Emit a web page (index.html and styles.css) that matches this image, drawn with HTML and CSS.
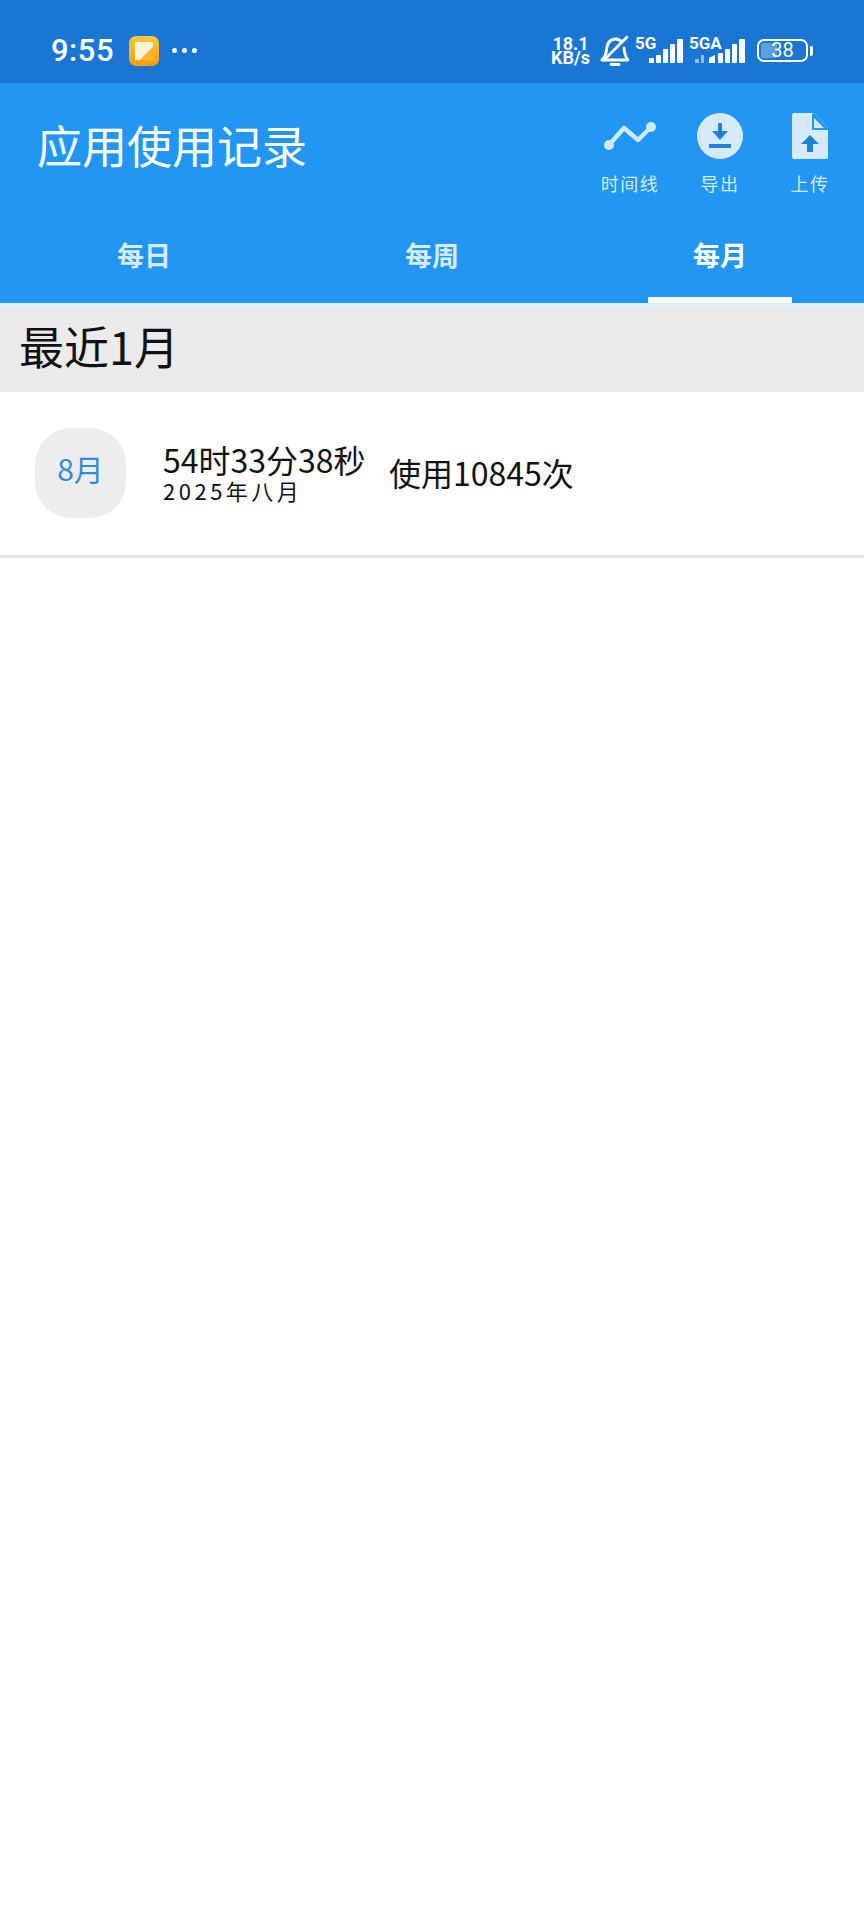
FILE: index.html
```html
<!DOCTYPE html>
<html lang="zh-CN">
<head>
    <meta charset="UTF-8">
    <meta name="viewport" content="width=device-width, initial-scale=1.0">
    <title>应用使用记录</title>
    <link rel="stylesheet" href="styles.css">
</head>
<body>

    <!-- barra de estado -->
    <div class="status-bar">
        <span class="clock">9:55</span>
        <svg class="app-icon" viewBox="0 0 30 30">
            <defs>
                <linearGradient id="appFondo" x1="0" y1="0" x2="0" y2="1">
                    <stop offset="0" stop-color="#ffc83d"/>
                    <stop offset="1" stop-color="#fb9d17"/>
                </linearGradient>
            </defs>
            <rect x="0" y="0" width="30" height="30" rx="7" fill="url(#appFondo)"/>
            <path d="M6 6H24V11L11 24H6Z" fill="#fff3d6"/>
            <path d="M24 11V24H11Z" fill="#ffb52e"/>
        </svg>
        <div class="dots"><i></i><i></i><i></i></div>

        <div class="status-right">
            <div class="net-speed"><span>18.1</span><span>KB/s</span></div>
            <svg class="bell" viewBox="0 0 30 32" fill="none" stroke="#fff" stroke-width="2.800" stroke-linecap="round" stroke-linejoin="round">
                <path d="M2 25C5 22 6 20 6.500 15C7 8 10 4 16 4C18 4 19.500 5 21 6"/>
                <path d="M24 13C24.500 20 25.500 22 28 25H2"/>
                <path d="M11 29.500H19"/>
                <path d="M27 2L4 25"/>
            </svg>
            <div class="signal">
                <span class="net-type">5G</span>
                <svg class="bars" viewBox="0 0 34 24" fill="#fff">
                    <rect x="0" y="19" width="5" height="5" rx="1"/>
                    <rect x="7" y="16" width="5" height="8" rx="1"/>
                    <rect x="14" y="10" width="5" height="14" rx="1"/>
                    <rect x="21" y="5" width="5" height="19" rx="1"/>
                    <rect x="28" y="0" width="6" height="24" rx="1"/>
                </svg>
            </div>
            <div class="signal signal-b">
                <span class="net-type">5GA</span>
                <svg class="bars" viewBox="0 0 50 24" fill="#fff">
                    <rect x="0" y="20" width="4" height="4" opacity=".5"/>
                    <rect x="6" y="16" width="3" height="8" opacity=".5"/>
                    <path d="M14 19L20 16V24H14Z"/>
                    <rect x="23" y="14" width="5" height="10" rx="1"/>
                    <rect x="30" y="10" width="5" height="14" rx="1"/>
                    <rect x="37" y="5" width="5" height="19" rx="1"/>
                    <rect x="44" y="0" width="6" height="24" rx="1"/>
                </svg>
            </div>
            <div class="battery">
                <div class="battery-body">
                    <div class="battery-level" style="width: 38%"></div>
                    <span class="battery-text">38</span>
                </div>
                <div class="battery-nub"></div>
            </div>
        </div>
    </div>

    <!-- cabecera -->
    <header class="app-header">
        <div class="title-row">
            <h1>应用使用记录</h1>
            <div class="actions">
                <div class="action action-line">
                    <svg viewBox="0 0 52 29" fill="none" stroke="#cfe8fb" stroke-width="4.500" stroke-linecap="round" stroke-linejoin="round">
                        <path d="M5 24L20 7L34 19L47 6"/>
                        <g fill="#cfe8fb" stroke="none">
                            <circle cx="5" cy="24" r="5"/>
                            <circle cx="47" cy="6" r="5"/>
                        </g>
                    </svg>
                    <span>时间线</span>
                </div>
                <div class="action action-down">
                    <svg viewBox="0 0 46 46">
                        <circle cx="23" cy="23" r="23" fill="#d6eafc"/>
                        <path d="M23 10V22" stroke="#2183d8" stroke-width="4" fill="none"/>
                        <path d="M15 18H31L23 27Z" fill="#2183d8"/>
                        <rect x="12" y="31" width="22" height="4" fill="#2183d8"/>
                    </svg>
                    <span>导出</span>
                </div>
                <div class="action action-up">
                    <svg viewBox="0 0 36 46">
                        <path d="M2 0H22L36 15V44Q36 46 34 46H2Q0 46 0 44V2Q0 0 2 0Z" fill="#d6eafc"/>
                        <path d="M20 1V17H36V15L22 0Z" fill="#2196f3"/>
                        <path d="M22 5L32 15H22Z" fill="#d6eafc"/>
                        <path d="M18 22L27 31H21V39H15V31H9Z" fill="#2183d8"/>
                    </svg>
                    <span>上传</span>
                </div>
            </div>
        </div>
        <nav class="tabs">
            <div class="tab">每日</div>
            <div class="tab">每周</div>
            <div class="tab tab-active">每月</div>
        </nav>
    </header>

    <h2 class="section-title">最近1月</h2>

    <div class="record-row">
        <div class="month-badge">8月</div>
        <div class="record-info">
            <div class="record-time">54时33分38秒</div>
            <div class="record-date">2025年八月</div>
        </div>
        <div class="record-count">使用10845次</div>
    </div>

</body>
</html>
```

FILE: styles.css
```css
* {
    box-sizing: border-box;
}

body {
    margin: 0;
    height: 1920px;
    background-color: #fff;
    font-family: "Noto Sans CJK SC", "Noto Sans", sans-serif;
    overflow: hidden;
}

/* barra de estado */
.status-bar {
    height: 83px;
    background-color: #1976d2;
    display: flex;
    align-items: center;
    padding: 18px 51px 0 51px;
    color: #fff;
}

.clock {
    font-family: Roboto, sans-serif;
    font-size: 31px;
    font-weight: 500;
    letter-spacing: 0.5px;
    width: 78px;
}

.app-icon {
    width: 30px;
    height: 30px;
}

.dots {
    display: flex;
    gap: 5px;
    margin-left: 13px;
}

.dots i {
    width: 5px;
    height: 5px;
    border-radius: 50%;
    background-color: #fff;
}

.status-right {
    margin-left: auto;
    display: flex;
    align-items: center;
}

.net-speed {
    display: flex;
    flex-direction: column;
    font-family: Roboto, sans-serif;
    font-size: 18px;
    font-weight: 700;
    line-height: 14px;
    text-align: center;
    width: 41px;
}

.bell {
    width: 30px;
    height: 32px;
    margin-left: 9px;
}

.signal {
    position: relative;
    width: 50px;
    height: 28px;
    margin-left: 5px;
}

.signal-b {
    width: 56px;
    margin-left: 4px;
}

.net-type {
    position: absolute;
    left: 0;
    top: -3px;
    font-family: Roboto, sans-serif;
    font-size: 17px;
    font-weight: 700;
    line-height: 18px;
}

.bars {
    position: absolute;
    right: 2px;
    bottom: 2px;
    width: 34px;
    height: 24px;
}

.signal-b .bars {
    right: 0;
    width: 50px;
}

.battery {
    display: flex;
    align-items: center;
    margin-left: 12px;
}

.battery-body {
    position: relative;
    width: 51px;
    height: 23px;
    border: 2.500px solid #fff;
    border-radius: 7px;
    padding: 2px;
}

.battery-level {
    height: 100%;
    background-color: rgba(255, 255, 255, 0.3);
    border-radius: 2px;
}

.battery-text {
    position: absolute;
    top: 0;
    left: 0;
    right: 0;
    font-family: Roboto, sans-serif;
    font-size: 20px;
    line-height: 18px;
    text-align: center;
}

.battery-nub {
    width: 3px;
    height: 10px;
    margin-left: 2px;
    background-color: #fff;
    border-radius: 0 2px 2px 0;
}

/* cabecera */
.app-header {
    height: 223px;
    background-color: #2196f3;
    border-bottom: 3px solid #e3f1fc;
    color: #fff;
}

.title-row {
    height: 120px;
    display: flex;
    justify-content: space-between;
    padding: 0 9px 0 37px;
}

h1 {
    margin: 0;
    font-size: 45px;
    font-weight: 400;
    line-height: 124px;
}

.actions {
    display: flex;
}

.action {
    width: 90px;
    display: flex;
    flex-direction: column;
    align-items: center;
    color: #d6eafc;
    font-size: 18px;
    letter-spacing: 1.500px;
    line-height: 26px;
}

.action svg {
    height: 46px;
    margin-top: 30px;
    margin-bottom: 11px;
}

.action-line svg {
    width: 52px;
    height: 29px;
    margin-top: 38px;
    margin-bottom: 20px;
}

.action-down svg {
    width: 46px;
}

.action-up svg {
    width: 36px;
}

.tabs {
    height: 100px;
    display: flex;
}

.tab {
    flex: 1;
    position: relative;
    text-align: center;
    font-size: 27px;
    font-weight: 700;
    line-height: 104px;
    color: #d6eafc;
}

.tab-active {
    color: #fff;
}

.tab-active::after {
    content: "";
    position: absolute;
    left: 72px;
    bottom: 0;
    width: 144px;
    height: 6px;
    background-color: #fff;
}

/* lista */
.section-title {
    margin: 0;
    height: 86px;
    padding-left: 19px;
    background-color: #ebebeb;
    color: #111;
    font-size: 45px;
    font-weight: 400;
    line-height: 80px;
}

.record-row {
    height: 166px;
    display: flex;
    align-items: center;
    padding-left: 35px;
    border-bottom: 3px solid #e6e6e6;
    color: #111;
}

.month-badge {
    width: 91px;
    height: 90px;
    margin-top: -2px;
    border-radius: 36px;
    background-color: #ededed;
    color: #2f8fd3;
    font-size: 30px;
    line-height: 80px;
    text-align: center;
}

.record-info {
    margin-left: 37px;
    margin-top: -5px;
    width: 226px;
}

.record-time {
    font-size: 32px;
    line-height: 38px;
}

.record-date {
    font-size: 22px;
    letter-spacing: 3.500px;
    line-height: 24px;
}

.record-count {
    font-size: 32px;
    margin-top: -3px;
}
```
